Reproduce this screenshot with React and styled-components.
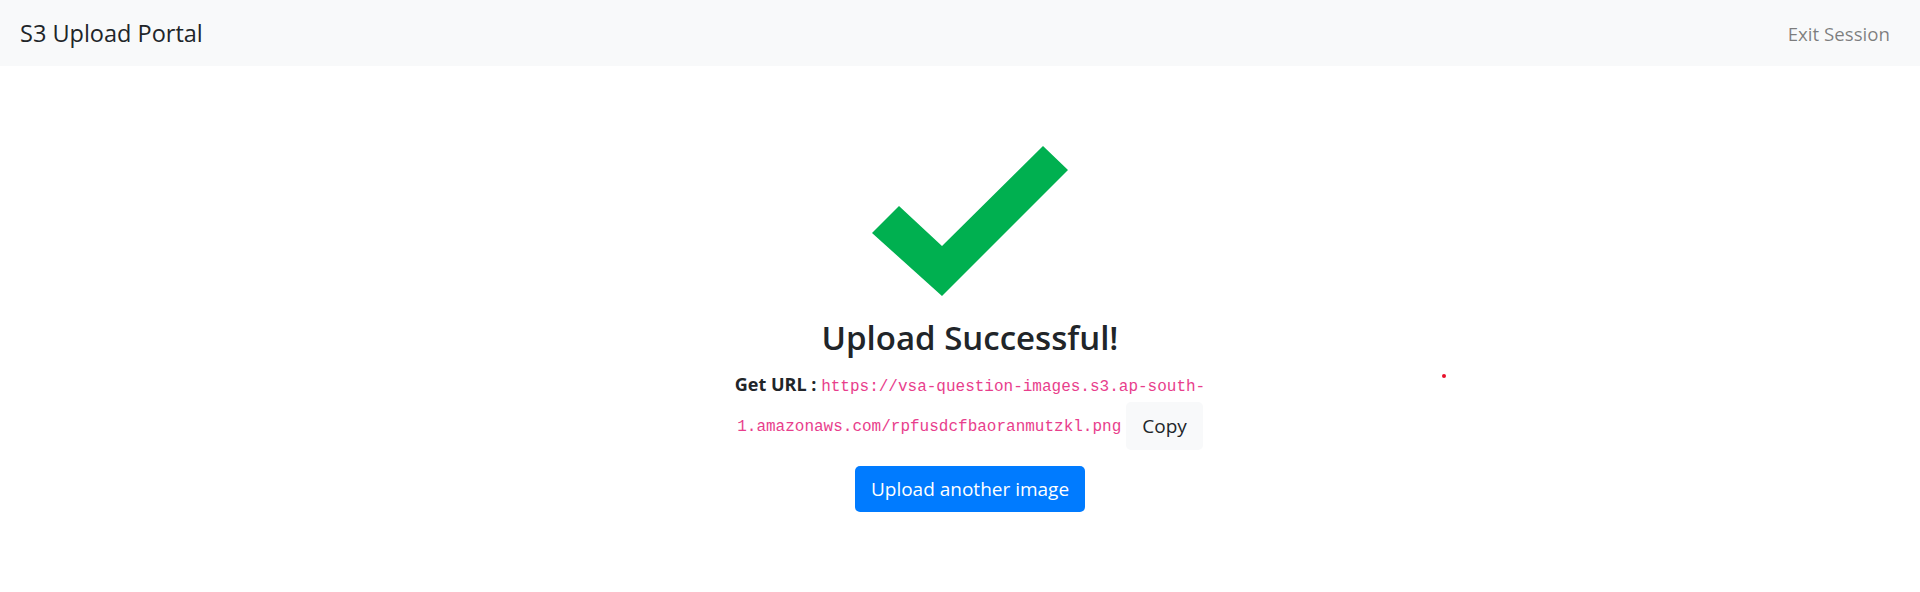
import React from 'react'
import styled, { createGlobalStyle } from 'styled-components';

const GlobalStyle = createGlobalStyle`
  body {
    margin: 0;
    background: #fff;
    font-family: "Open Sans", "Noto Sans", sans-serif;
    color: #212529;
  }
`;

const Navbar = styled.nav`
  height: 66px;
  background-color: #f8f9fa;
  display: flex;
  align-items: center;
  justify-content: space-between;
  padding: 0 30px 0 20px;
`;

const Brand = styled.a`
  font-size: 23.5px;
  color: #212529;
  text-decoration: none;
`;

const NavLink = styled.a`
  font-size: 18.7px;
  color: rgba(0, 0, 0, 0.5);
  text-decoration: none;
`;

const Main = styled.main`
  display: flex;
  flex-direction: column;
  align-items: center;
  padding: 80px 0 0 20px;
`;

const Check = styled.svg`
  width: 196px;
  height: 150px;
  display: block;
`;

const Heading = styled.h2`
  margin: 22px 0 0;
  font-size: 33px;
  font-weight: 600;
  line-height: 1.2;
`;

const UrlLine = styled.p`
  max-width: 490px;
  margin: 11.5px 0 0;
  text-align: center;
  font-size: 18px;
  line-height: 30px;
`;

const Label = styled.b`
  font-weight: 700;
`;

const Code = styled.code`
  font-family: "Liberation Mono", "DejaVu Sans Mono", monospace;
  font-size: 16px;
  color: #e83e8c;
  word-wrap: break-word;
`;

const Button = styled.button`
  font-family: inherit;
  font-size: 19px;
  border: none;
  border-radius: 5px;
  cursor: pointer;
  color: ${(props) => (props.primary ? '#fff' : '#212529')};
  background-color: ${(props) => (props.primary ? '#007bff' : '#f8f9fa')};
  padding: 0 16px;
  height: ${(props) => (props.primary ? '46px' : '48px')};
  vertical-align: middle;
`;

const CopyButton = styled(Button)`
  margin-left: 5px;
`;

const UploadButton = styled(Button)`
  margin-top: 16px;
`;

const Dot = styled.span`
  position: absolute;
  left: 1442px;
  top: 374px;
  width: 4px;
  height: 4px;
  border-radius: 50%;
  background: #e8102a;
`;

const App = () => {
  return (
    <>
      <GlobalStyle />
      <Navbar>
        <Brand href="#">S3 Upload Portal</Brand>
        <NavLink href="#">Exit Session</NavLink>
      </Navbar>
      <Main>
        <Check viewBox="0 0 196 150">
          <polygon points="0,87 27,60 70,100 171,0 196,24 70,150" fill="#00b050" />
        </Check>
        <Heading>Upload Successful!</Heading>
        <UrlLine>
          <Label>Get URL : </Label>
          <Code>https://vsa-question-images.s3.ap-south-1.amazonaws.com/rpfusdcfbaoranmutzkl.png</Code>
          <CopyButton>Copy</CopyButton>
        </UrlLine>
        <UploadButton primary>Upload another image</UploadButton>
      </Main>
      <Dot />
    </>
  )
}

export default App
